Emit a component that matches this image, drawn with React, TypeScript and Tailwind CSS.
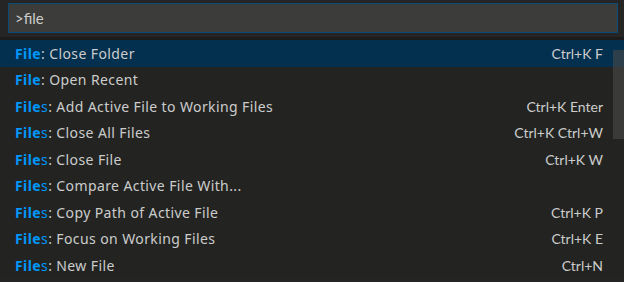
import React from 'react'

type Item = { prefix: string; rest: string; label: string; keys?: string }

const items: Item[] = [
  { prefix: 'File', rest: '', label: ': Close Folder', keys: 'Ctrl+K F' },
  { prefix: 'File', rest: '', label: ': Open Recent' },
  { prefix: 'File', rest: 's', label: ': Add Active File to Working Files', keys: 'Ctrl+K Enter' },
  { prefix: 'File', rest: 's', label: ': Close All Files', keys: 'Ctrl+K Ctrl+W' },
  { prefix: 'File', rest: 's', label: ': Close File', keys: 'Ctrl+K W' },
  { prefix: 'File', rest: 's', label: ': Compare Active File With...' },
  { prefix: 'File', rest: 's', label: ': Copy Path of Active File', keys: 'Ctrl+K P' },
  { prefix: 'File', rest: 's', label: ': Focus on Working Files', keys: 'Ctrl+K E' },
  { prefix: 'File', rest: 's', label: ': New File', keys: 'Ctrl+N' },
]

export default function App() {
  return (
    <div className="w-[624px] h-[282px] overflow-hidden bg-[#252526] text-[#cccccc] font-['Lato','Noto_Sans',sans-serif]">
      {/* input */}
      <div className="pl-[8px] pr-[6px] pt-[3px] h-[37px]">
        <div className="h-[30px] border border-[#0b4a75] bg-[#3c3d3b] flex items-center pl-[6px] text-[15px]">
          &gt;file
        </div>
      </div>
      <div className="h-[3px] bg-[#1b1c1b]" />

      {/* list */}
      <div className="relative bg-[#232422]">
        {items.map((it, i) => (
          <div
            key={i}
            className={
              'h-[26.5px] flex items-center justify-between pl-[15px] pr-[21px] text-[14px] ' +
              (i === 0 ? 'bg-[#04304f]' : '')
            }
          >
            <span className="whitespace-nowrap font-['Noto_Sans',sans-serif] tracking-[0.4px]">
              <span className="font-bold text-[#0097fb]">{it.prefix}</span>
              {it.rest && <span className="text-[#0097fb]">{it.rest}</span>}
              {it.label}
            </span>
            {it.keys && <span className="whitespace-nowrap">{it.keys}</span>}
          </div>
        ))}
        <div className="absolute right-0 top-[10px] w-[11px] h-[89px] bg-[#4a4a4a]/60" />
      </div>
    </div>
  )
}
